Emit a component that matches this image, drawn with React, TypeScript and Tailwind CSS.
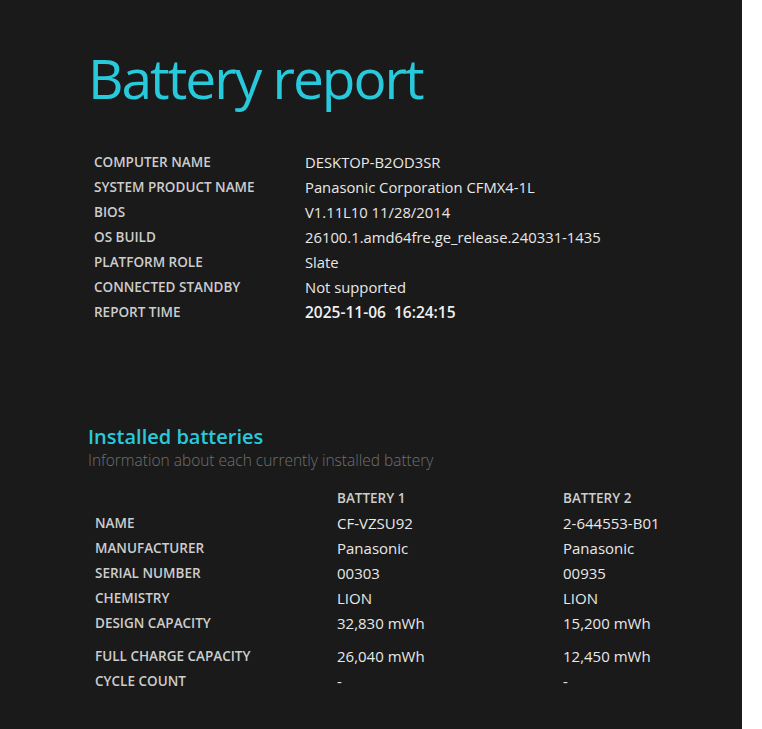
export default function App() {
  const system = [
    ['COMPUTER NAME', 'DESKTOP-B2OD3SR'],
    ['SYSTEM PRODUCT NAME', 'Panasonic Corporation CFMX4-1L'],
    ['BIOS', 'V1.11L10 11/28/2014'],
    ['OS BUILD', '26100.1.amd64fre.ge_release.240331-1435'],
    ['PLATFORM ROLE', 'Slate'],
    ['CONNECTED STANDBY', 'Not supported'],
  ]

  const batteries = [
    ['NAME', 'CF-VZSU92', '2-644553-B01'],
    ['MANUFACTURER', 'Panasonic', 'Panasonic'],
    ['SERIAL NUMBER', '00303', '00935'],
    ['CHEMISTRY', 'LION', 'LION'],
    ['DESIGN CAPACITY', '32,830 mWh', '15,200 mWh'],
  ]

  return (
    <div className="min-h-[729px] w-[762px] bg-white font-['Open_Sans',sans-serif]">
      <div className="w-[742px] min-h-[729px] bg-[#1a1a1a] pl-[88px] pt-[46px]">
        <h1 className="text-[55px] font-normal leading-[64px] text-[#29c9dc] tracking-[-2px]">Battery report</h1>

        <div className="mt-[40px] pl-[6px]">
          {system.map(([label, value]) => (
            <div key={label} className="flex h-[25px] items-center">
              <div className="w-[211px] text-[13.5px] font-semibold text-[#cdcdcd]">{label}</div>
              <div className="text-[14.8px] text-[#e8e8e8]">{value}</div>
            </div>
          ))}
          <div className="flex h-[25px] items-center">
            <div className="w-[211px] text-[13.5px] font-semibold text-[#cdcdcd]">REPORT TIME</div>
            <div className="text-[15.5px] font-semibold text-[#f0f0f0] whitespace-pre">2025-11-06  16:24:15</div>
          </div>
        </div>

        <div className="mt-[99px]">
          <h2 className="text-[20px] font-semibold leading-[26px] text-[#29c9dc]">Installed batteries</h2>
          <p className="text-[15.5px] font-light leading-[20px] text-[#707070]">Information about each currently installed battery</p>
        </div>

        <div className="mt-[16px] pl-[7px]">
          <div className="flex h-[25px] items-center">
            <div className="w-[242px]" />
            <div className="w-[226px] text-[13.5px] font-semibold text-[#cdcdcd]">BATTERY 1</div>
            <div className="text-[13.5px] font-semibold text-[#cdcdcd]">BATTERY 2</div>
          </div>
          {batteries.map(([label, b1, b2]) => (
            <div key={label} className="flex h-[25px] items-center">
              <div className="w-[242px] text-[13.5px] font-semibold text-[#cdcdcd]">{label}</div>
              <div className="w-[226px] text-[15px] text-[#e8e8e8]">{b1}</div>
              <div className="text-[15px] text-[#e8e8e8]">{b2}</div>
            </div>
          ))}
          <div className="mt-[8px] flex h-[25px] items-center">
            <div className="w-[242px] text-[13.5px] font-semibold text-[#cdcdcd]">FULL CHARGE CAPACITY</div>
            <div className="w-[226px] text-[15px] text-[#e8e8e8]">26,040 mWh</div>
            <div className="text-[15px] text-[#e8e8e8]">12,450 mWh</div>
          </div>
          <div className="flex h-[25px] items-center">
            <div className="w-[242px] text-[13.5px] font-semibold text-[#cdcdcd]">CYCLE COUNT</div>
            <div className="w-[226px] text-[15px] text-[#e8e8e8]">-</div>
            <div className="text-[15px] text-[#e8e8e8]">-</div>
          </div>
        </div>
      </div>
    </div>
  )
}
